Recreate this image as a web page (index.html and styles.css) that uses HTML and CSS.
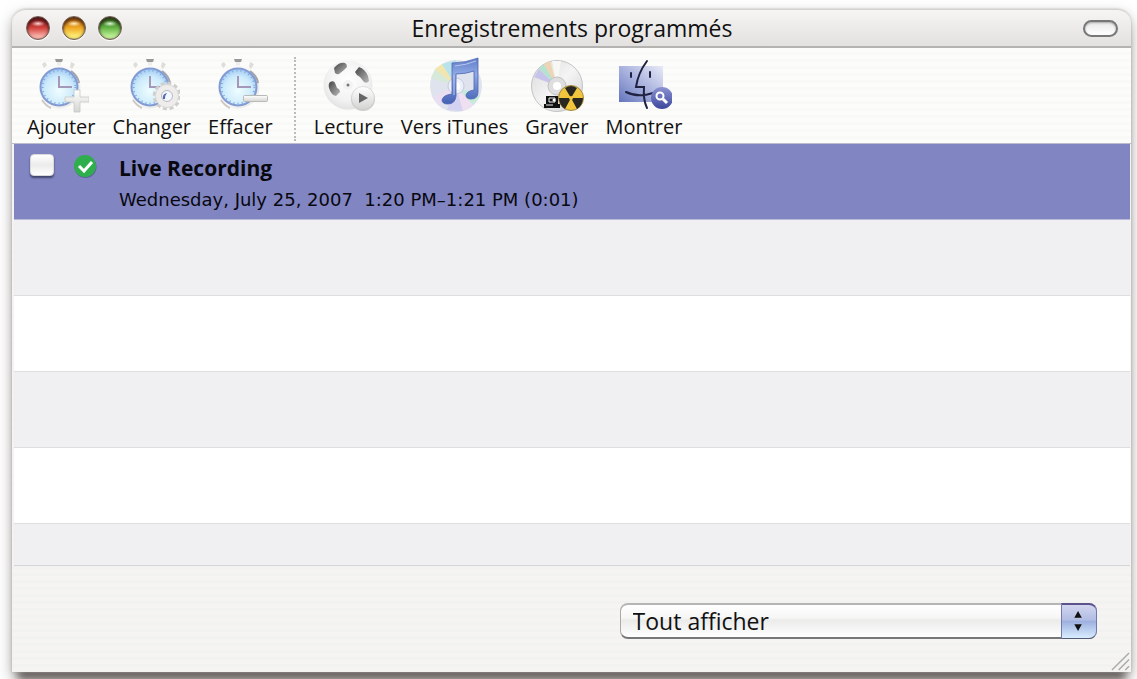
FILE: index.html
```html
<!DOCTYPE html>
<html lang="fr">
<head>
<meta charset="utf-8">
<title>Enregistrements programmés</title>
<link rel="stylesheet" href="styles.css">
</head>
<body>
<svg class="defs" width="0" height="0" aria-hidden="true">
  <defs>
    <radialGradient id="face" cx=".5" cy=".6" r=".55"><stop offset="0" stop-color="#effdff"/><stop offset=".7" stop-color="#cdebfb"/><stop offset="1" stop-color="#a9d0f4"/></radialGradient>
    <linearGradient id="case" x1="0" y1="0" x2="1" y2="1"><stop offset="0" stop-color="#fff"/><stop offset=".6" stop-color="#f4f4f4"/><stop offset="1" stop-color="#e4e4e4"/></linearGradient>
    <linearGradient id="silver" x1="0" y1="0" x2="0" y2="1"><stop offset="0" stop-color="#fff"/><stop offset="1" stop-color="#d4d4d2"/></linearGradient>
    <radialGradient id="reel" cx=".5" cy=".4" r=".6"><stop offset="0" stop-color="#fff"/><stop offset=".7" stop-color="#f2f2f2"/><stop offset="1" stop-color="#e2e2e2"/></radialGradient>
    <linearGradient id="slot" x1="0" y1="0" x2="1" y2="1"><stop offset="0" stop-color="#444"/><stop offset="1" stop-color="#bbb"/></linearGradient>
    <linearGradient id="disc" x1="0" y1="0" x2="1" y2="1"><stop offset="0" stop-color="#d9d9dc"/><stop offset=".5" stop-color="#f4f4f4"/><stop offset="1" stop-color="#cfcfd2"/></linearGradient>
    <linearGradient id="note" x1="0" y1="0" x2="0" y2="1"><stop offset="0" stop-color="#5f7cc6"/><stop offset=".35" stop-color="#8fa9e4"/><stop offset="1" stop-color="#4561b4"/></linearGradient>
    <linearGradient id="finder" x1="1" y1="0" x2="0" y2="1"><stop offset="0" stop-color="#e8ebf8"/><stop offset=".5" stop-color="#a9b2de"/><stop offset="1" stop-color="#6475bd"/></linearGradient>
    <linearGradient id="lens" x1="0" y1="0" x2="0" y2="1"><stop offset="0" stop-color="#8c93d2"/><stop offset="1" stop-color="#3c479d"/></linearGradient>
    <g id="clock">
      <path d="M9 7l3-2 2 3-3 3zM38 5l4 2-3 5-2-2z" fill="#deddda"/>
      <path d="M22 2h8l-1 3h-6z" fill="#999"/><path d="M24 5h4v5h-4z" fill="#eee"/>
      <circle cx="26" cy="30" r="21.500" fill="url(#case)"/>
      <path d="M38 14q7 5 8 12" fill="none" stroke="#a5a5aa" stroke-width="2"/>
      <path d="M9 43q4 6 9 8" fill="none" stroke="#cfc9c5" stroke-width="2"/>
      <circle cx="26" cy="30" r="18.500" fill="url(#face)" stroke="#839bd3" stroke-width="2"/>
      <circle cx="26" cy="30" r="16.500" fill="none" stroke="#7fa8dd" stroke-width="2" stroke-dasharray="1 3.2"/>
      <path d="M26 19v11h13" fill="none" stroke="#a698b8" stroke-width="2"/>
    </g>
  </defs>
</svg>
<main class="window">
  <header class="titlebar">
    <div class="lights">
      <button class="light red" aria-label="Fermer"></button>
      <button class="light yellow" aria-label="Réduire"></button>
      <button class="light green" aria-label="Agrandir"></button>
    </div>
    <h1 class="title">Enregistrements programmés</h1>
    <button class="pill" aria-label="Barre d’outils"></button>
  </header>
  <nav class="toolbar">
    <button class="tool">
      <svg class="icon" viewBox="0 0 56 56"><use href="#clock"/><path d="M41 33h6v7h9v5h-9v10h-6V45h-9v-5h9z" fill="url(#silver)" stroke="#c8c8c6" stroke-width=".8"/></svg>
      <span>Ajouter</span>
    </button>
    <button class="tool">
      <svg class="icon" viewBox="0 0 56 56"><use href="#clock"/><circle cx="43" cy="39" r="12" fill="none" stroke="#cfcecc" stroke-width="4.5" stroke-dasharray="3.8 2.48"/><circle cx="43" cy="39" r="11.5" fill="#eeedeb" stroke="#dad9d7"/><circle cx="43" cy="39" r="5.5" fill="#f2f8fd" stroke="#b9bac0"/><path d="M39 42q-1-5 4-6-2 2-2 6z" fill="#5568b0"/></svg>
      <span>Changer</span>
    </button>
    <button class="tool">
      <svg class="icon" viewBox="0 0 56 56"><use href="#clock"/><rect x="31.500" y="38.500" width="24" height="6" rx="1" fill="url(#silver)" stroke="#b9b9b7"/></svg>
      <span>Effacer</span>
    </button>
    <span class="divider"></span>
    <button class="tool">
      <svg class="icon" viewBox="0 0 56 56"><circle cx="27" cy="28" r="24.500" fill="url(#reel)"/><g fill="url(#slot)"><path d="M13 11q5-6 11-5 2 1 2 4l-3 3-5 4q-2 1-4-1z"/><path d="M34 15l4-5q6 2 9 9l1 5q-2 3-5 1l-4-5q-4-2-5-5z"/><path d="M9 25q4-2 5 1l2 5q3 1 3 4l-4 4q-5-1-7-8-1-4 1-6z"/></g><circle cx="27" cy="28" r="5" fill="#f3f3f3"/><circle cx="27" cy="28" r="1.500" fill="#777"/><circle cx="42" cy="42" r="12" fill="#cfcfcf"/><circle cx="42" cy="41" r="11.500" fill="url(#silver)" stroke="#c9c9c9" stroke-width=".6"/><path d="M38 36l9 5-9 5z" fill="#666"/></svg>
      <span>Lecture</span>
    </button>
    <button class="tool">
      <svg class="icon" viewBox="0 0 56 56"><circle cx="30" cy="29" r="26" fill="#dfe3ee"/><path d="M30 29L5 21l4-9z" fill="#d7e9d8"/><path d="M30 29L9 12l7-5z" fill="#f2e6ae"/><path d="M30 29L16 7l14-4z" fill="#b9e3ea"/><path d="M30 29L6 40l7 9z" fill="#eadff2"/><path d="M30 29l-9 24 16 1z" fill="#d3d2f1"/><path d="M30 29l7 25 10-6z" fill="#efdff1"/><path d="M30 29l17 19 7-9z" fill="#c5ebda"/><circle cx="30" cy="29" r="8" fill="#edf0f8" stroke="#c6cbe0"/><circle cx="30" cy="29" r="4" fill="#fff"/><path d="M26 6q13 0 26-5v34q0 7-7 7-5 0-5-4 1-4 8-5V14q-8 3-18 3v22q-1 8-8 8-6 0-6-4 1-5 10-6z" fill="url(#note)" stroke="#4e65b2" stroke-width=".8"/><path d="M29 9q11-1 21-5M28 18v20" fill="none" stroke="#b5c7f0"/></svg>
      <span>Vers iTunes</span>
    </button>
    <button class="tool">
      <svg class="icon" viewBox="0 0 56 56"><circle cx="28" cy="29" r="25.500" fill="url(#disc)" stroke="#c4c4c6"/><path d="M28 29L5 20l5-8z" fill="#c7c4ec"/><path d="M28 29L10 12l5-5z" fill="#b5e3d0"/><path d="M28 29L15 7l6-3z" fill="#f0d3b2"/><path d="M28 29L23 4h9z" fill="#f7f7f4"/><circle cx="28" cy="29" r="9" fill="#dededf" stroke="#c2c2c4"/><circle cx="28" cy="29" r="4" fill="#fff"/><path d="M17 39h12v8h2v4H15v-4h2z" fill="#111"/><path d="M20 41h6v4h-6zM17 48h7" fill="none" stroke="#eee"/><circle cx="25" cy="43" r="1.500" fill="#fff"/><circle cx="42" cy="41" r="12.500" fill="#f2c53c" stroke="#a08943"/><path d="M42 41L36 31q6-4 12 0zM42 41h12q0 7-6 11zM42 41H30q0 7 6 11z" fill="#292722"/><circle cx="42" cy="41" r="2" fill="#f2c53c"/></svg>
      <span>Graver</span>
    </button>
    <button class="tool">
      <svg class="icon" viewBox="0 0 56 56"><path d="M3 9h44v36H3z" fill="url(#finder)"/><path d="M31 4Q22 16 20 30h8q-1 13 3 21M10 35q12 6 27 1M15 16v4M34 15v5" fill="none" stroke="#1f2340" stroke-width="2" stroke-linecap="round"/><circle cx="46" cy="41" r="11" fill="url(#lens)"/><circle cx="44" cy="39" r="3.500" fill="none" stroke="#fff" stroke-width="2"/><path d="M47 42l4 4" stroke="#fff" stroke-width="3"/></svg>
      <span>Montrer</span>
    </button>
  </nav>
  <ul class="list">
    <li class="row selected">
      <input class="check" type="checkbox" aria-label="Live Recording">
      <svg class="status" viewBox="0 0 24 24" aria-hidden="true"><circle cx="12.500" cy="13" r="11" fill="#34466b" opacity=".5"/><circle cx="12" cy="12" r="11" fill="#2fae4d"/><path d="M6 12l5 5 8-9" fill="none" stroke="#fff" stroke-width="3"/></svg>
      <div class="details">
        <strong class="name">Live Recording</strong>
        <span class="when">Wednesday, July 25, 2007&nbsp; 1:20 PM–1:21 PM (0:01)</span>
      </div>
    </li>
    <li class="row"></li>
    <li class="row"></li>
    <li class="row"></li>
    <li class="row"></li>
    <li class="row last"></li>
  </ul>
  <footer class="footer">
    <div class="popup">
      <select class="select" aria-label="Filtre"><option>Tout afficher</option></select>
      <svg class="arrows" viewBox="0 0 36 34" aria-hidden="true"><path d="M17 6l4 7h-8zM17 27l4-7h-8z" fill="#111"/></svg>
    </div>
    <svg class="grip" viewBox="0 0 20 20" aria-hidden="true"><path d="M1 19L19 1M8 19L19 8M15 19l4-4" stroke="#aaa" stroke-width="1.500"/></svg>
  </footer>
</main>
</body>
</html>
```
FILE: styles.css
```css
* { box-sizing: border-box; }

body {
  margin: 0;
  min-height: 100vh;
  padding: 9px 6px 7px 12px;
  display: flex;
  overflow: hidden;
  background: #fff;
  color: #111;
  font-family: "Open Sans", "Noto Sans", sans-serif;
}

button { border: 0; padding: 0; background: none; color: inherit; font: inherit; }

.defs { position: absolute; }

.window {
  flex: 1;
  display: flex;
  flex-direction: column;
  border-radius: 14px 14px 0 0;
  background: repeating-linear-gradient(#f5f4f2 0 4px, #f2f2f0 4px 7px);
  box-shadow: 0 0 2px #aaa, 0 14px 8px -6px #6b6563, 0 6px 14px rgba(80, 75, 70, .5);
}

.titlebar {
  height: 39px;
  padding: 0 13px 0 14px;
  display: grid;
  grid-template-columns: 1fr auto 1fr;
  align-items: center;
  border-top: 1px solid #d2d1cf;
  border-bottom: 2px solid #b4b3b1;
  border-radius: 14px 14px 0 0;
  background: linear-gradient(#f6f5f4, #e2e1df);
}

.lights { display: flex; gap: 12px; }

.light {
  width: 24px;
  height: 24px;
  border: 1px solid #6f5b55;
  border-radius: 50%;
  box-shadow: inset 0 3px 3px rgba(40, 20, 20, .65), inset 0 0 3px rgba(50, 20, 10, .5), 0 1px 1px #fff;
}

.red { background: radial-gradient(ellipse 7px 3px at 50% 30%, #f8d5d2, transparent), linear-gradient(#a32628 20%, #d2433e 50%, #ffb9b0 90%); }
.yellow { background: radial-gradient(ellipse 7px 3px at 50% 30%, #ffefc5, transparent), linear-gradient(#cf7b13 20%, #efaa25 50%, #fff27c 90%); }
.green { background: radial-gradient(ellipse 7px 3px at 50% 30%, #e1f3d6, transparent), linear-gradient(#3d8529 20%, #66b547 50%, #c4f69c 90%); }

.title { margin: 0; font-size: 23px; line-height: 30px; font-weight: 400; }

.pill {
  justify-self: end;
  width: 35px;
  height: 17px;
  border: 2px solid #777;
  border-radius: 9px;
  background: linear-gradient(#e8e8e7, #fff);
  box-shadow: inset 0 1px 2px #aaa;
}

.toolbar {
  height: 96px;
  padding: 9px 15px 0;
  display: flex;
  gap: 17px;
  border-bottom: 1px solid #bcbccb;
  background: repeating-linear-gradient(#fcfcfa 0 4px, #f9f9f7 4px 7px);
}

.tool {
  display: flex;
  flex-direction: column;
  align-items: center;
  font-size: 20px;
  line-height: 28px;
  white-space: nowrap;
}

.icon { width: 56px; height: 56px; }

.divider { height: 84px; margin: 0 1px 0 4px; border-left: 2px dotted #bbb; }

.list {
  flex: 1;
  margin: 0 1px 0 2px;
  padding: 0;
  display: flex;
  flex-direction: column;
  list-style: none;
  border-bottom: 1px solid #d6d5d8;
}

.row { height: 76px; border-bottom: 1px solid #dedee0; background: #fff; }
.row:nth-child(even) { background: #f0f0f3; }
.row.last { flex: 1; height: auto; border: 0; }

.row.selected {
  display: flex;
  align-items: flex-start;
  padding: 10px 16px 0;
  border-color: #b9bbd8;
  background: #8185c1;
}

.check {
  appearance: none;
  width: 24px;
  height: 22px;
  margin: 0 19px 0 0;
  border: 1px solid #d9d9d9;
  border-radius: 4px;
  background: linear-gradient(#fff, #ebebea 50%, #fff);
  box-shadow: 0 2px 2px #41446c;
}

.status { width: 24px; height: 24px; margin-right: 22px; }

.details { display: flex; flex-direction: column; color: #08080f; }
.name { font-size: 21px; line-height: 28px; font-weight: 700; }
.when { margin-top: 5px; font: 18px/26px "DejaVu Sans", sans-serif; }

.footer {
  position: relative;
  height: 106px;
  padding: 4px 34px 0 0;
  display: flex;
  justify-content: flex-end;
  align-items: center;
}

.popup { position: relative; width: 44%; height: 36px; }

.select {
  appearance: none;
  width: 100%;
  height: 36px;
  padding: 0 48px 0 12px;
  border: 1px solid #aaa;
  border-top: 2px solid #b5b5b4;
  border-bottom: 2px solid #777;
  border-radius: 8px;
  background: linear-gradient(#fff, #f6f6f5 40%, #ebebea 48%, #fff);
  color: #111;
  font: 23px/30px "Open Sans", "Noto Sans", sans-serif;
}

.arrows {
  position: absolute;
  top: 0;
  right: 0;
  width: 36px;
  height: 36px;
  border: 1px solid #7578af;
  border-top: 2px solid #5c528c;
  border-bottom-color: #555c78;
  border-radius: 0 8px 8px 0;
  background: linear-gradient(#d2d6ef, #b2bde4 45%, #9eb0df 50%, #d8edff);
  pointer-events: none;
}

.grip { position: absolute; right: 1px; bottom: 1px; width: 19px; height: 19px; }
```
